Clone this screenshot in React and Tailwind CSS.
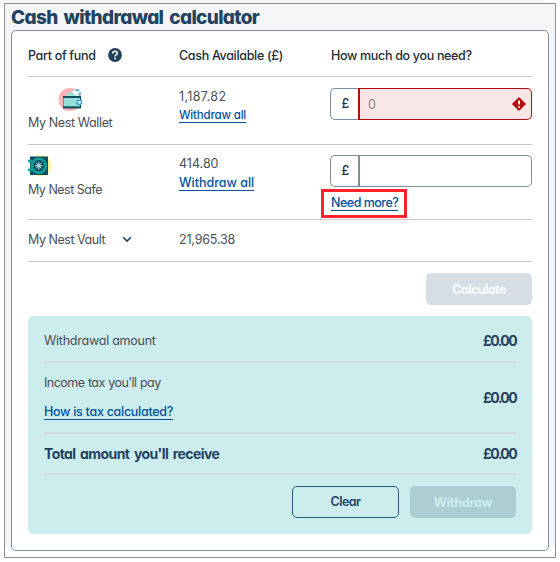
import React, { useState } from "react";

const WalletIcon = () => (
  <svg width="25" height="24" viewBox="0 0 25 24" className="ml-[30px] block">
    <circle cx="12" cy="11.5" r="11.5" fill="#ffb3b8" />
    <path d="M7 8.500 13 2.500l8 6z" fill="#a5e0d6" />
    <path d="M14 4.500l4-3.500 4.500 5-3 2.500z" fill="#e9fbfa" />
    <path d="M17.500 2h2.500l2.500 3.500-2.500 2.500" stroke="#2a9fd8" strokeWidth="1.3" strokeDasharray="4 1.500" fill="none" />
    <rect x="5" y="8" width="18" height="12.5" fill="#15505c" />
    <rect x="5.5" y="10" width="16.5" height="8.3" fill="#93e0d5" />
    <rect x="18.8" y="12.3" width="5" height="4" rx="2" fill="#c9f3f5" stroke="#2a9fd8" strokeWidth="1.2" />
  </svg>
);

const SafeIcon = () => (
  <svg width="24" height="22" viewBox="0 0 24 22" className="block">
    <circle cx="12.5" cy="10.7" r="10.7" fill="#fff09a" />
    <rect x="2" y="1.5" width="18" height="18.5" fill="#0d5260" />
    <path d="M0 6h4M0 15h4" stroke="#12a19a" strokeWidth="2.5" />
    <circle cx="10.8" cy="10.8" r="7" fill="#0d5260" stroke="#12a19a" strokeWidth="2.6" />
    <path d="M10.8 7v7.6M7 10.8h7.6M8.2 8.2l5.2 5.2M13.4 8.2l-5.2 5.2" stroke="#c5f0f4" strokeWidth="1" />
  </svg>
);

const HelpIcon = () => (
  <svg width="14" height="14" viewBox="0 0 14 14" className="block">
    <circle cx="7" cy="7" r="6.9" fill="#24425f" />
    <path d="M4.7 5.5C4.7 4.100 5.700 3.300 7 3.300S9.300 4.100 9.300 5.300C9.300 6.800 7.100 6.700 7.100 8.500" stroke="#fff" strokeWidth="1.6" fill="none" />
    <circle cx="7.1" cy="10.4" r="1" fill="#fff" />
  </svg>
);

const ErrorIcon = () => (
  <svg width="14" height="14" viewBox="0 0 14 14" className="mr-[5px] block">
    <path d="M7 .9 13.1 7 7 13.1.9 7z" fill="#b30c0c" stroke="#b30c0c" strokeWidth="1.4" strokeLinejoin="round" />
    <path d="M7 3.4v4.2" stroke="#fff" strokeWidth="1.8" />
    <circle cx="7" cy="9.9" r="1" fill="#fff" />
  </svg>
);

const AmountInput = ({ error, placeholder, value, onChange }) => (
  <div className="flex h-8 w-[202px]">
    <span className="flex w-[28px] items-center justify-center rounded-l-[5px] border border-r-0 border-[#7b8d9e] pl-[2px] text-[12.5px] font-medium text-[#222b33]">
      £
    </span>
    <div
      className={
        error
          ? "flex flex-1 items-center rounded-r-[5px] border border-l-2 border-[#b30c0c] bg-[#f8e6e6]"
          : "flex flex-1 items-center rounded-r-[5px] border border-l-2 border-[#7b8d9e] bg-white"
      }
    >
      <input
        className="w-full min-w-0 bg-transparent pt-[2px] pl-2 text-[12.5px] text-[#222b33] outline-none placeholder:text-[#7d838c]"
        placeholder={placeholder}
        value={value}
        onChange={onChange}
      />
      {error && <div><ErrorIcon /></div>}
    </div>
  </div>
);

export default function App() {
  const [wallet, setWallet] = useState("");
  const [safe, setSafe] = useState("");

  return (
    <div className="h-[562px] w-[560px] bg-white bg-[linear-gradient(#f4f5f7,#f4f5f7)] bg-[length:545px_7px] bg-no-repeat pt-[3px] pl-1 font-['Inter','Liberation_Sans',sans-serif] text-[12.5px] leading-4 text-[#4a4f55] [font-feature-settings:'cv11']">
      <div className="h-[555px] w-[552px] border border-[#8c8d90] bg-[linear-gradient(#f4f5f7,#f4f5f7)] bg-[length:100%_543px] bg-no-repeat pl-[6px]">
        <h1 className="h-[26px] pt-[1px] text-[19px] leading-[25px] font-extrabold tracking-[-0.67px] whitespace-nowrap text-[#24425f] [word-spacing:2.5px]">
          Cash withdrawal calculator
        </h1>
        <div className="h-[521px] w-[538px] rounded-[5px] border border-[#7b8d9e] bg-white px-4">
          <div className="grid h-[46px] grid-cols-[151px_151px_202px] border-b border-[#c8c9ca] pt-[17px] font-medium tracking-[-0.32px] text-[#222b33]">
            <div className="flex"><span className="w-[80px]">Part of fund</span><HelpIcon /></div>
            <span>Cash Available (£)</span>
            <span className="pl-[1px]">How much do you need?</span>
          </div>

          <div className="grid h-[68px] grid-cols-[151px_151px_202px] border-b border-[#c8c9ca] pt-[11px]">
            <div>
              <WalletIcon />
              <div className="mt-[3px] tracking-[-0.38px]">My Nest Wallet</div>
            </div>
            <div className="pt-[1px]">
              <div className="tracking-[0.35px]">1,187.82</div>
              <a href="#" className="mt-[3px] block w-fit border-b border-[#00539f] text-[11.5px] leading-[14px] font-medium tracking-[-0.18px] text-[#00539f]">Withdraw all</a>
            </div>
            <AmountInput error placeholder="0" value={wallet} onChange={(e) => setWallet(e.target.value)} />
          </div>

          <div className="grid h-[75px] grid-cols-[151px_151px_202px] border-b border-[#c8c9ca] pt-[10px]">
            <div className="-mt-px pt-px">
              <SafeIcon />
              <div className="mt-[5px] tracking-[-0.5px]">My Nest Safe</div>
            </div>
            <div className="pt-[1px]">
              <div>414.80</div>
              <a href="#" className="mt-[4px] block w-fit border-b border-[#00539f] leading-[14px] font-medium text-[#00539f]">Withdraw all</a>
            </div>
            <div>
              <AmountInput value={safe} onChange={(e) => setSafe(e.target.value)} />
              <div className="mt-[2px] -ml-[9px] h-[29px] w-[86px] border-3 border-[#fd232c] pt-[4px] pl-[7px]">
                <a href="#" className="block w-fit border-b border-[#00539f] leading-[14px] font-medium tracking-[-0.5px] text-[#00539f]">Need more?</a>
              </div>
            </div>
          </div>

          <div className="grid h-[42px] grid-cols-[151px_151px_202px] border-b border-[#c8c9ca] pt-3">
            <div className="flex">
              <span className="w-[94px] tracking-[-0.47px]">My Nest Vault</span>
              <svg width="10" height="16" viewBox="0 0 10 16" fill="none" stroke="#24425f" strokeWidth="1.6">
                <path d="M1.2 5.200 5 9l3.800-3.800" />
              </svg>
            </div>
            <span className="tracking-[-0.18px]">21,965.38</span>
          </div>

          <button className="mt-[11px] ml-auto block h-8 w-[106px] rounded-[5px] bg-[#d6dde4] pt-[2px] font-bold tracking-[-0.58px] text-[#f9fbfc]">
            Calculate
          </button>

          <div className="mt-[11px] h-[218px] rounded-[5px] bg-[#cdeced] px-4">
            <div className="flex h-[47px] justify-between border-b-2 border-[#d3d9e0] pt-[17px]">
              <span className="tracking-[-0.24px]">Withdrawal amount</span>
              <span className="text-[14px] font-bold tracking-[-1.6px] text-[#24425f]">£0.00</span>
            </div>
            <div className="flex h-[71px] justify-between border-b-2 border-[#d3d9e0]">
              <div className="pt-3">
                <div className="tracking-[-0.52px] [word-spacing:0.4px]">Income tax you'll pay</div>
                <a href="#" className="mt-[14px] block w-fit border-b border-[#00539f] leading-[14px] font-medium tracking-[-0.28px] text-[#00539f]">How is tax calculated?</a>
              </div>
              <span className="pt-[27px] text-[14px] font-bold tracking-[-1.6px] text-[#24425f]">£0.00</span>
            </div>
            <div className="flex h-[41px] justify-between border-b-2 border-[#d3d9e0] pt-3 text-[14px] font-bold text-[#24425f]">
              <span className="tracking-[-0.58px] [word-spacing:1.8px]">Total amount you'll receive</span>
              <span className="tracking-[-1.6px]">£0.00</span>
            </div>
            <div className="mt-[11px] flex justify-end gap-[11px]">
              <button className="h-8 w-[107px] rounded-[5px] border border-[#235a7c] font-semibold tracking-[-0.5px] text-[#24425f]">Clear</button>
              <button className="h-8 w-[106px] rounded-[5px] bg-[#abced5] pt-[2px] font-bold tracking-[-0.2px] text-[#d0edef]">Withdraw</button>
            </div>
          </div>
        </div>
      </div>
    </div>
  );
}
